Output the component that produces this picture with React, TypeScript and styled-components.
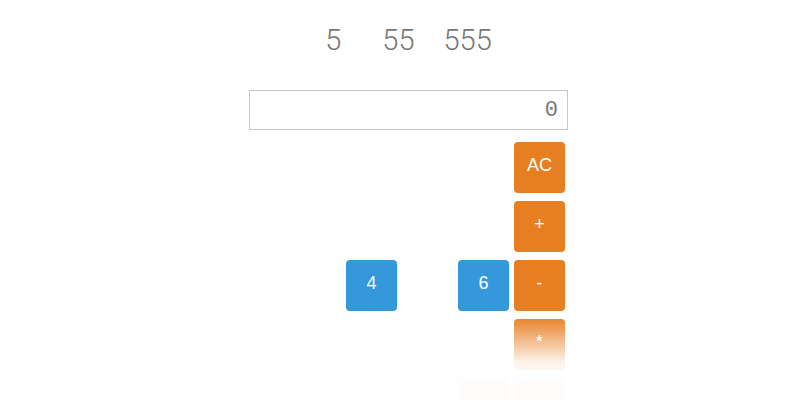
import React from "react";
import styled, { createGlobalStyle } from "styled-components";

const GlobalStyle = createGlobalStyle`
  html, body {
    margin: 0;
    padding: 0;
    background: #fff;
    height: 400px;
    overflow: hidden;
  }
  body {
    font-family: "Liberation Sans", Arial, sans-serif;
  }
`;

const Page = styled.div`
  position: relative;
  height: 400px;
  display: flex;
  flex-direction: column;
  align-items: center;
  padding-left: 17px;
  box-sizing: border-box;
`;

const History = styled.div`
  display: flex;
  margin-top: 23px;
  height: 38px;
  align-items: center;
  font-family: Roboto, "Liberation Sans", sans-serif;
  font-weight: 300;
  font-size: 29px;
  color: #777;
`;

const Entry = styled.span<{ $gap: number }>`
  margin-left: ${(p) => p.$gap}px;
`;

const Calculator = styled.div`
  width: 319px;
  margin-top: 33px;
  display: flex;
  flex-direction: column;
  gap: 12px;
`;

const Screen = styled.div`
  height: 40px;
  box-sizing: border-box;
  border: 1px solid #c8c8c8;
  display: flex;
  align-items: center;
  justify-content: flex-end;
  padding-right: 9px;
  font-family: "Liberation Mono", monospace;
  font-size: 22px;
  color: #777;
`;

const Keys = styled.div`
  display: grid;
  grid-template-columns: repeat(4, 51px);
  grid-auto-rows: 51px;
  column-gap: 5px;
  row-gap: 8px;
  justify-content: end;
  padding-right: 3px;
`;

const Key = styled.button<{ $tone: "num" | "op"; $hidden?: boolean }>`
  border: none;
  border-radius: 4px;
  padding: 0 0 5px;
  color: #fff;
  font-family: "Liberation Sans", Arial, sans-serif;
  font-size: 18px;
  background: ${(p) => (p.$tone === "num" ? "#3498db" : "#e67e22")};
  visibility: ${(p) => (p.$hidden ? "hidden" : "visible")};
`;

const FaintKey = styled.div`
  border-radius: 4px;
  background: #e67e22;
`;

const Fade = styled.div`
  position: absolute;
  left: 0;
  right: 0;
  top: 316px;
  bottom: 0;
  pointer-events: none;
  background: linear-gradient(
    to bottom,
    rgba(255, 255, 255, 0) 0px,
    rgba(255, 255, 255, 0.35) 18px,
    rgba(255, 255, 255, 0.9) 46px,
    rgba(255, 255, 255, 0.985) 60px
  );
`;

type Cell = { label: string; tone: "num" | "op"; hidden?: boolean };

const rows: Cell[][] = [
  [
    { label: "7", tone: "num", hidden: true },
    { label: "8", tone: "num", hidden: true },
    { label: "9", tone: "num", hidden: true },
    { label: "AC", tone: "op" },
  ],
  [
    { label: "1", tone: "num", hidden: true },
    { label: "2", tone: "num", hidden: true },
    { label: "3", tone: "num", hidden: true },
    { label: "+", tone: "op" },
  ],
  [
    { label: "4", tone: "num" },
    { label: "5", tone: "num", hidden: true },
    { label: "6", tone: "num" },
    { label: "-", tone: "op" },
  ],
  [
    { label: "0", tone: "num", hidden: true },
    { label: ".", tone: "num", hidden: true },
    { label: "=", tone: "num", hidden: true },
    { label: "*", tone: "op" },
  ],
];

export default function App() {
  return (
    <>
      <GlobalStyle />
      <Page>
        <History>
          <Entry $gap={0}>5</Entry>
          <Entry $gap={41}>55</Entry>
          <Entry $gap={29}>555</Entry>
        </History>
        <Calculator>
          <Screen>0</Screen>
          <Keys>
            {rows.flat().map((k, i) => (
              <Key key={i} $tone={k.tone} $hidden={k.hidden}>
                {k.label}
              </Key>
            ))}
            <span />
            <span />
            <FaintKey />
            <FaintKey />
          </Keys>
        </Calculator>
        <Fade />
      </Page>
    </>
  );
}
